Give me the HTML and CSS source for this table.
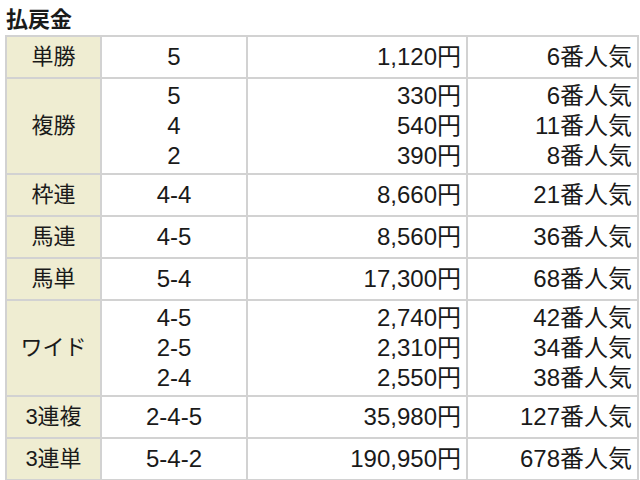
FILE: index.html
```html
<!DOCTYPE html>
<html lang="ja">
<head>
<meta charset="utf-8">
<title>払戻金</title>
<link rel="stylesheet" href="styles.css">
</head>
<body>
<h2 class="title">払戻金</h2>
<table class="payout">
  <colgroup>
    <col class="c-type">
    <col class="c-num">
    <col class="c-pay">
    <col class="c-pop">
  </colgroup>
  <tbody>
    <tr>
      <th>単勝</th><td class="num">5</td><td class="pay">1,120円</td><td class="pop">6番人気</td>
    </tr>
    <tr class="multi">
      <th>複勝</th><td class="num">5<br>4<br>2</td><td class="pay">330円<br>540円<br>390円</td><td class="pop">6番人気<br>11番人気<br>8番人気</td>
    </tr>
    <tr>
      <th>枠連</th><td class="num">4-4</td><td class="pay">8,660円</td><td class="pop">21番人気</td>
    </tr>
    <tr>
      <th>馬連</th><td class="num">4-5</td><td class="pay">8,560円</td><td class="pop">36番人気</td>
    </tr>
    <tr>
      <th>馬単</th><td class="num">5-4</td><td class="pay">17,300円</td><td class="pop">68番人気</td>
    </tr>
    <tr class="multi">
      <th>ワイド</th><td class="num">4-5<br>2-5<br>2-4</td><td class="pay">2,740円<br>2,310円<br>2,550円</td><td class="pop">42番人気<br>34番人気<br>38番人気</td>
    </tr>
    <tr>
      <th>3連複</th><td class="num">2-4-5</td><td class="pay">35,980円</td><td class="pop">127番人気</td>
    </tr>
    <tr>
      <th>3連単</th><td class="num">5-4-2</td><td class="pay">190,950円</td><td class="pop">678番人気</td>
    </tr>
  </tbody>
</table>
</body>
</html>
```
FILE: styles.css
```css
html, body {
  margin: 0;
  padding: 0;
  background: #ffffff;
}

body {
  font-family: "Liberation Sans", "Noto Sans CJK JP", sans-serif;
  color: #1a1a1a;
}

.title {
  margin: 0 0 1px 0;
  padding: 6px 0 0 6px;
  font-size: 22px;
  line-height: 28px;
  font-weight: bold;
}

.payout {
  margin-left: 5px;
  width: 632px;
  border-collapse: collapse;
  table-layout: fixed;
  font-size: 24px;
}

.c-type { width: 95px; }
.c-num { width: 146px; }
.c-pay { width: 220px; }
.c-pop { width: 171px; }

.payout th,
.payout td {
  border: 2px solid #d2d2d2;
  padding: 5px 5px;
  line-height: 30px;
  vertical-align: middle;
}

.payout .multi th,
.payout .multi td {
  padding-top: 2px;
  padding-bottom: 2px;
}

.payout th {
  background: #efedd2;
  font-weight: normal;
  text-align: center;
  font-size: 22px;
}

.num { text-align: center; }

.pay {
  text-align: right;
  padding-right: 6px;
}

.pop {
  text-align: right;
  padding-right: 3px;
}
```
